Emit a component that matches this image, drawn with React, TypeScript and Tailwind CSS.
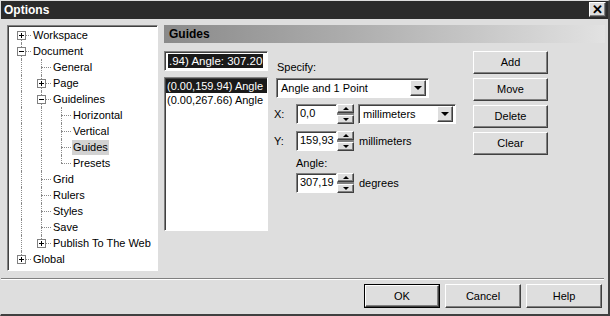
import React from 'react';

type Row = {
  label: string;
  level: number;
  box?: '+' | '-';
  first?: boolean;
  last?: boolean;
  guides: boolean[];
  selected?: boolean;
};

const rows: Row[] = [
  { label: 'Workspace', level: 0, box: '+', first: true, guides: [] },
  { label: 'Document', level: 0, box: '-', guides: [] },
  { label: 'General', level: 1, guides: [true] },
  { label: 'Page', level: 1, box: '+', guides: [true] },
  { label: 'Guidelines', level: 1, box: '-', guides: [true] },
  { label: 'Horizontal', level: 2, guides: [true, true] },
  { label: 'Vertical', level: 2, guides: [true, true] },
  { label: 'Guides', level: 2, guides: [true, true], selected: true },
  { label: 'Presets', level: 2, last: true, guides: [true, true] },
  { label: 'Grid', level: 1, guides: [true] },
  { label: 'Rulers', level: 1, guides: [true] },
  { label: 'Styles', level: 1, guides: [true] },
  { label: 'Save', level: 1, guides: [true] },
  { label: 'Publish To The Web', level: 1, box: '+', last: true, guides: [true] },
  { label: 'Global', level: 0, box: '+', last: true, guides: [] },
];

const raised =
  'border border-t-white border-l-white border-r-[#404040] border-b-[#404040] shadow-[inset_-1px_-1px_0_#808080] bg-[#dedede]';
const sunken =
  'border border-t-[#808080] border-l-[#808080] border-r-white border-b-white shadow-[inset_1px_1px_0_#404040] bg-white';

function Expander({ sign }: { sign: '+' | '-' }) {
  return (
    <span className="absolute left-[6px] top-[4px] w-[9px] h-[9px] border border-[#808080] bg-white">
      <span className="absolute left-[1px] top-[3px] w-[5px] h-px bg-black" />
      {sign === '+' && <span className="absolute left-[3px] top-[1px] w-px h-[5px] bg-black" />}
    </span>
  );
}

function TreeRow({ row }: { row: Row }) {
  const cols = [];
  for (let i = 0; i < row.level; i++) {
    cols.push(
      <span key={i} className="relative w-[20px] h-[16px] shrink-0">
        {row.guides[i] && (
          <span className="absolute left-[10px] top-0 bottom-0 border-l border-dotted border-[#8a8a8a]" />
        )}
      </span>
    );
  }
  return (
    <div className="flex items-center h-[16px]">
      {cols}
      <span className="relative w-[20px] h-[16px] shrink-0">
        {!row.first && <span className="absolute left-[10px] top-0 h-[8px] border-l border-dotted border-[#8a8a8a]" />}
        {!row.last && <span className="absolute left-[10px] top-[8px] bottom-0 border-l border-dotted border-[#8a8a8a]" />}
        <span className="absolute left-[10px] right-0 top-[8px] border-t border-dotted border-[#8a8a8a]" />
        {row.box && <Expander sign={row.box} />}
      </span>
      <span className={`ml-[1px] px-[1px] leading-[15px] ${row.selected ? 'bg-[#d2d2d2]' : ''}`}>{row.label}</span>
    </div>
  );
}

function Arrow({ up }: { up?: boolean }) {
  return (
    <span
      className={`w-0 h-0 border-l-[3px] border-r-[3px] border-l-transparent border-r-transparent ${
        up ? 'border-b-[3px] border-b-black' : 'border-t-[3px] border-t-black'
      }`}
    />
  );
}

function Spin({ value, w }: { value: string; w: string }) {
  return (
    <div className="flex h-[20px]">
      <div className={`${sunken} ${w} h-full px-[3px] leading-[17px]`}>{value}</div>
      <div className="flex flex-col w-[17px] h-full">
        <div className={`${raised} flex-1 flex items-center justify-center`}>
          <Arrow up />
        </div>
        <div className="h-[2px] bg-[#808080]" />
        <div className={`${raised} flex-1 flex items-center justify-center`}>
          <Arrow />
        </div>
      </div>
    </div>
  );
}

function Select({ value, w }: { value: string; w: string }) {
  return (
    <div className={`${sunken} ${w} h-[20px] flex items-center pl-[4px] pr-[2px]`}>
      <span className="flex-1">{value}</span>
      <span className={`${raised} w-[16px] h-[16px] flex items-center justify-center`}>
        <span className="w-0 h-0 border-l-[4px] border-r-[4px] border-t-[4px] border-l-transparent border-r-transparent border-t-black" />
      </span>
    </div>
  );
}

function Button({ label, def }: { label: string; def?: boolean }) {
  const inner = (
    <div className={`${raised} w-full h-full flex items-center justify-center`}>{label}</div>
  );
  return def ? (
    <div className="w-[76px] h-[24px] border border-black">{inner}</div>
  ) : (
    <div className="w-[76px] h-[24px]">{inner}</div>
  );
}

export default function App() {
  return (
    <div className="w-[610px] h-[316px] flex flex-col bg-[#dedede] border border-r-2 border-b-2 border-l-[#dedede] border-t-[#dedede] border-r-[#404040] border-b-[#404040] text-[11px] text-black font-['Liberation_Sans',Arial,sans-serif] overflow-hidden select-none">
      {/* Title bar */}
      <div className="h-[19px] -mx-px -mt-px bg-[#2b2b2b] flex items-center justify-between pl-[4px] pr-[3px] shrink-0">
        <span className="text-white font-bold text-[12px]">Options</span>
        <span className={`${raised} w-[17px] h-[15px] flex items-center justify-center text-[13px] font-bold leading-none`}>
          ✕
        </span>
      </div>

      <div className="flex pt-[6px] pl-[6px] gap-[6px]">
        {/* Tree */}
        <div className={`${sunken} w-[151px] h-[246px] pl-[3px] pt-[1px] overflow-hidden`}>
          {rows.map((r) => (
            <TreeRow key={r.label} row={r} />
          ))}
        </div>

        {/* Right side */}
        <div className="w-[441px] flex flex-col">
          <div className="h-[18px] bg-gradient-to-r from-[#8a8a8a] via-[#b4b4b4] to-[#e2e2e2] flex items-center pl-[5px]">
            <span className="font-bold text-[12px]">Guides</span>
          </div>
          <div className="flex mt-[8px]">
            <div className="w-[104px] flex flex-col gap-[6px]">
              <div className={`${sunken} h-[20px] flex items-center pl-[3px] overflow-hidden whitespace-nowrap`}>
                <span className="bg-[#1a1a1a] text-white text-[11.5px] leading-[14px] px-px">.94) Angle: 307.20</span>
              </div>
              <div className={`${sunken} h-[154px] pt-[1px] pl-[1px] overflow-hidden whitespace-nowrap`}>
                <div className="bg-[#1a1a1a] text-white leading-[14px] pl-[1px]">(0.00,159.94) Angle</div>
                <div className="leading-[14px] pl-[1px]">(0.00,267.66) Angle</div>
              </div>
            </div>

            <div className="w-[185px] ml-[6px] flex flex-col">
              <span className="mt-[9px] ml-[3px] leading-[14px]">Specify:</span>
              <div className="mt-[4px] ml-[2px]">
                <Select value="Angle and 1 Point" w="w-[153px]" />
              </div>
              <div className="flex items-center mt-[6px]">
                <span className="w-[22px]">X:</span>
                <Spin value="0,0" w="w-[41px]" />
                <div className="ml-[4px]">
                  <Select value="millimeters" w="w-[98px]" />
                </div>
              </div>
              <div className="flex items-center mt-[7px]">
                <span className="w-[22px]">Y:</span>
                <Spin value="159,93" w="w-[41px]" />
                <span className="ml-[5px]">millimeters</span>
              </div>
              <span className="mt-[5px] ml-[22px] leading-[14px]">Angle:</span>
              <div className="flex items-center mt-[3px] ml-[22px]">
                <Spin value="307,19" w="w-[41px]" />
                <span className="ml-[5px]">degrees</span>
              </div>
            </div>

            <div className="ml-[14px] flex flex-col gap-[4px]">
              {['Add', 'Move', 'Delete', 'Clear'].map((l) => (
                <div key={l} className="w-[75px] h-[23px]">
                  <div className={`${raised} w-full h-full flex items-center justify-center`}>{l}</div>
                </div>
              ))}
            </div>
          </div>
        </div>
      </div>

      <div className="mt-[7px] h-[2px] border-t border-t-[#808080] border-b border-b-white mr-[4px]" />

      <div className="flex justify-end gap-[5px] pr-[6px] mt-[4px]">
        <Button label="OK" def />
        <Button label="Cancel" />
        <Button label="Help" />
      </div>
    </div>
  );
}
